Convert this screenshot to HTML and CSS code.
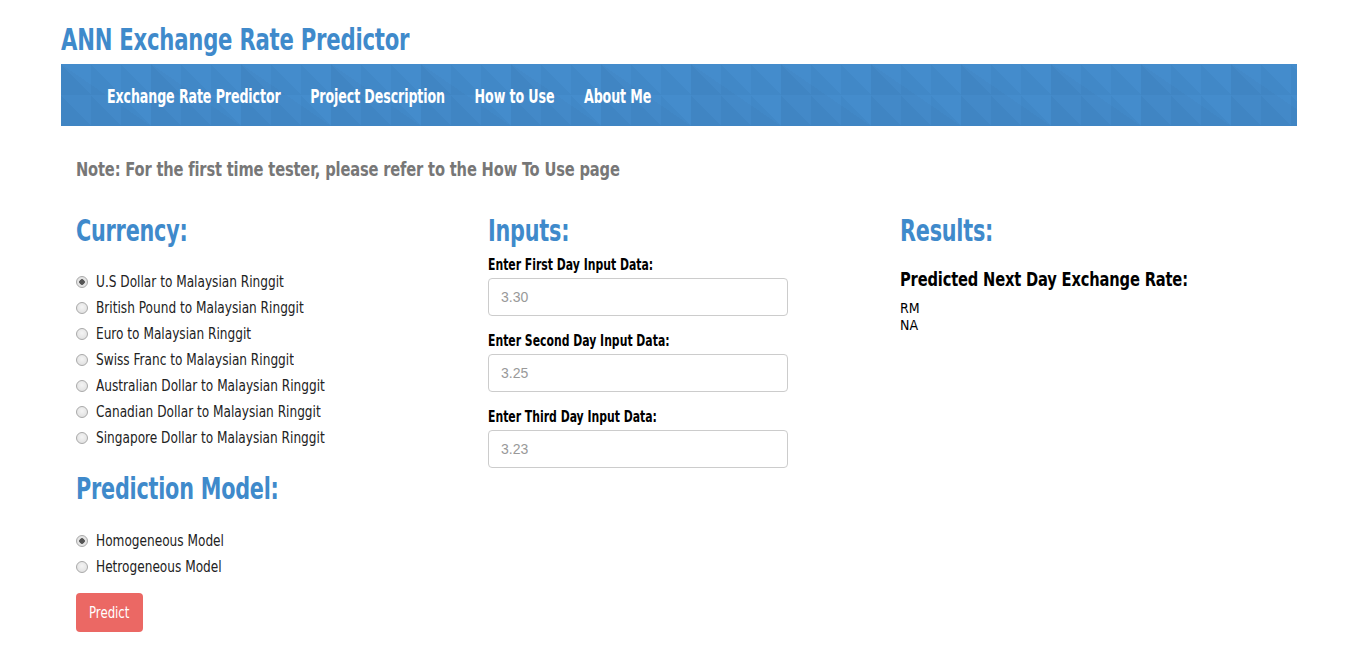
FILE: index.html
```html
<!DOCTYPE html>
<html>
<head>
<meta charset="utf-8">
<title>ANN Exchange Rate Predictor</title>
<link rel="stylesheet" href="styles.css">
</head>
<body>
<div class="page">
  <h1 class="title"><span class="narrow n76">ANN Exchange Rate Predictor</span></h1>
  <nav class="navbar">
    <div class="nav-list">
      <a class="nav-link">Exchange Rate Predictor</a>
      <a class="nav-link">Project Description</a>
      <a class="nav-link">How to Use</a>
      <a class="nav-link">About Me</a>
    </div>
  </nav>
  <div class="content">
    <p class="note"><span class="narrow n81">Note: For the first time tester, please refer to the How To Use page</span></p>
    <div class="row">
      <div class="col">
        <h2 class="heading"><span class="narrow n77">Currency:</span></h2>
        <div class="radios">
          <label class="radio"><input type="radio" name="cur" checked><span class="narrow n90">U.S Dollar to Malaysian Ringgit</span></label>
          <label class="radio"><input type="radio" name="cur"><span class="narrow n90">British Pound to Malaysian Ringgit</span></label>
          <label class="radio"><input type="radio" name="cur"><span class="narrow n90">Euro to Malaysian Ringgit</span></label>
          <label class="radio"><input type="radio" name="cur"><span class="narrow n90">Swiss Franc to Malaysian Ringgit</span></label>
          <label class="radio"><input type="radio" name="cur"><span class="narrow n90">Australian Dollar to Malaysian Ringgit</span></label>
          <label class="radio"><input type="radio" name="cur"><span class="narrow n90">Canadian Dollar to Malaysian Ringgit</span></label>
          <label class="radio"><input type="radio" name="cur"><span class="narrow n90">Singapore Dollar to Malaysian Ringgit</span></label>
        </div>
        <h2 class="heading heading-model"><span class="narrow n77">Prediction Model:</span></h2>
        <div class="radios">
          <label class="radio"><input type="radio" name="model" checked><span class="narrow n90">Homogeneous Model</span></label>
          <label class="radio"><input type="radio" name="model"><span class="narrow n90">Hetrogeneous Model</span></label>
        </div>
        <button class="btn"><span class="narrow n87 center">Predict</span></button>
      </div>
      <div class="col">
        <h2 class="heading"><span class="narrow n77">Inputs:</span></h2>
        <div class="field first">
          <label class="field-label"><span class="narrow n80">Enter First Day Input Data:</span></label>
          <input class="input" type="text" placeholder="3.30">
        </div>
        <div class="field">
          <label class="field-label"><span class="narrow n80">Enter Second Day Input Data:</span></label>
          <input class="input" type="text" placeholder="3.25">
        </div>
        <div class="field">
          <label class="field-label"><span class="narrow n80">Enter Third Day Input Data:</span></label>
          <input class="input" type="text" placeholder="3.23">
        </div>
      </div>
      <div class="col">
        <h2 class="heading"><span class="narrow n77">Results:</span></h2>
        <h4 class="sub"><span class="narrow n81">Predicted Next Day Exchange Rate:</span></h4>
        <div class="out">RM</div>
        <div class="out">NA</div>
      </div>
    </div>
  </div>
</div>
</body>
</html>
```

FILE: styles.css
```css
* { box-sizing: border-box; }
body {
  margin: 0;
  background: #fff;
  font-family: "DejaVu Sans Condensed", "Liberation Sans", sans-serif;
  color: #222;
}
.narrow {
  display: inline-block;
  white-space: nowrap;
  transform-origin: left center;
}
.narrow.center { transform-origin: center center; }
.n76 { transform: scaleX(0.76); }
.n77 { transform: scaleX(0.77); }
.n80 { transform: scaleX(0.805); }
.n81 { transform: scaleX(0.815); }
.n87 { transform: scaleX(0.87); }
.n90 { transform: scaleX(0.9); }
.page {
  width: 1236px;
  margin-left: 61px;
}
.title {
  margin: 0;
  padding-top: 20px;
  height: 64px;
  font-size: 31px;
  line-height: 38px;
  font-weight: bold;
  color: #3f8acb;
  letter-spacing: -0.3px;
}
.navbar {
  height: 62px;
  display: flex;
  align-items: center;
  padding-left: 46px;
  padding-top: 2px;
  background-color: #428bcb;
  background-image:
    linear-gradient(to top right, rgba(0,0,0,0.02) 50%, rgba(255,255,255,0.012) 50%),
    linear-gradient(to top right, rgba(0,0,0,0.018) 50%, transparent 50%);
  background-size: 30px 31px, 90px 62px;
}
.nav-list {
  display: flex;
  gap: 40px;
  transform: scaleX(0.74);
  transform-origin: left center;
}
.nav-link {
  color: #fff;
  font-size: 19px;
  font-weight: bold;
  letter-spacing: -0.15px;
  white-space: nowrap;
}
.content {
  padding: 0 15px;
}
.note {
  margin: 30px 0 0;
  font-size: 20px;
  line-height: 26px;
  font-weight: bold;
  color: #777;
  letter-spacing: -0.2px;
}
.row {
  display: grid;
  grid-template-columns: 412px 412px 1fr;
  margin-top: 29px;
}
.heading {
  margin: 0;
  font-size: 30px;
  line-height: 40px;
  font-weight: bold;
  color: #3f8acb;
  letter-spacing: -0.3px;
}
.radios {
  display: flex;
  flex-direction: column;
  margin-top: 18px;
}
.heading-model + .radios { margin-top: 19px; }
.radio {
  display: flex;
  align-items: center;
  height: 26px;
  font-size: 15px;
  color: #222;
}
.radio input {
  appearance: none;
  -webkit-appearance: none;
  flex: none;
  width: 12px;
  height: 12px;
  margin: 0 8px 0 0;
  border-radius: 50%;
  border: 1px solid #a9a9a9;
  background: radial-gradient(circle at 50% 40%, #f4f4f4, #dcdcdc);
}
.radio input:checked {
  background: radial-gradient(circle, #555 0 2.5px, #e4e4e4 3px);
}
.heading-model {
  margin-top: 18px;
}
.btn {
  display: block;
  margin-top: 13px;
  width: 67px;
  height: 39px;
  border: none;
  border-radius: 4px;
  background: #eb6864;
  color: #fff;
  font-family: inherit;
  font-size: 15px;
  padding: 0;
}
.field {
  display: flex;
  flex-direction: column;
  align-items: flex-start;
}
.field-label {
  font-size: 15px;
  font-weight: bold;
  color: #000;
  line-height: 20px;
  margin-bottom: 3px;
}
.field + .field { margin-top: 15px; }
.field.first { margin-top: 4px; }
.input {
  width: 300px;
  height: 38px;
  border: 1px solid #ccc;
  border-radius: 4px;
  padding: 6px 12px;
  font-family: "Liberation Sans", Arial, sans-serif;
  font-size: 14px;
}
.input::placeholder { color: #999; }
.sub {
  margin: 16px 0 0;
  font-size: 20px;
  line-height: 24px;
  font-weight: bold;
  color: #000;
  letter-spacing: -0.2px;
}
.out {
  font-size: 14px;
  line-height: 17px;
  color: #000;
}
.sub + .out { margin-top: 9px; }
```
